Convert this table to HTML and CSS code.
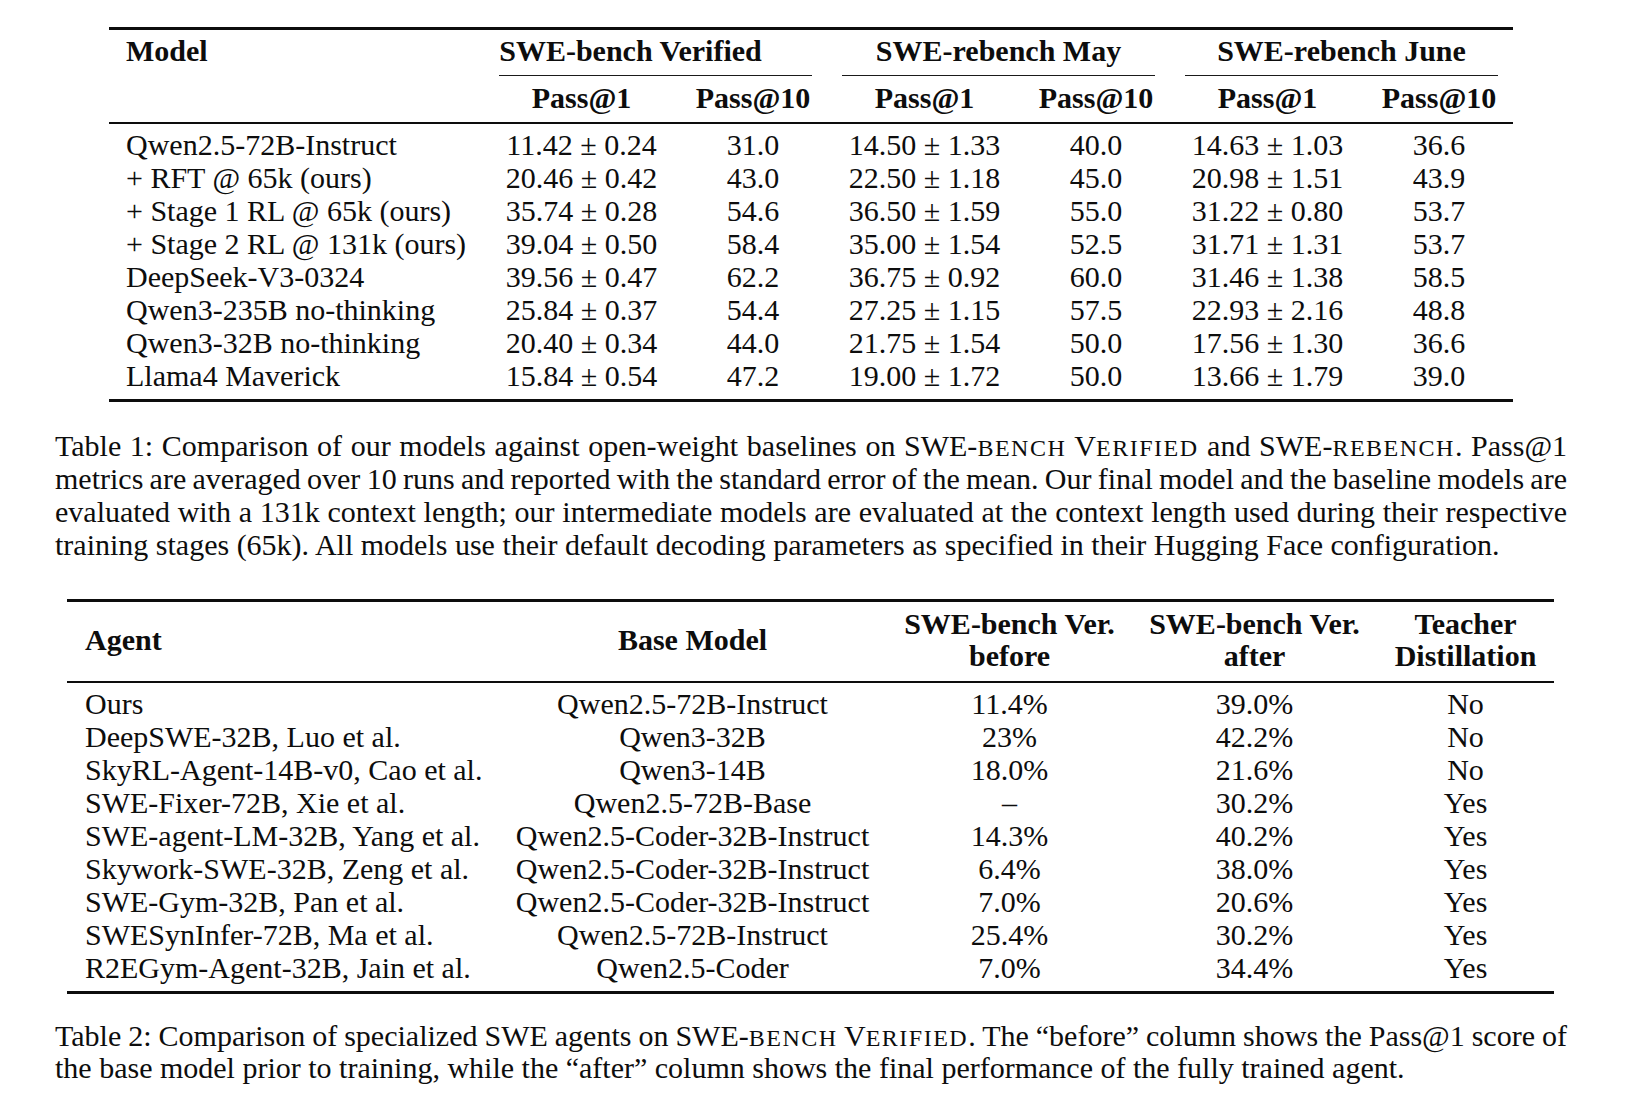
FILE: index.html
```html
<!DOCTYPE html>
<html lang="en">
<head>
<meta charset="utf-8">
<title>Tables</title>
<link rel="stylesheet" href="styles.css">
</head>
<body>
<div class="page">
  <table class="t1">
    <colgroup>
      <col class="c-model"><col class="c-wide"><col class="c-narrow"><col class="c-wide"><col class="c-narrow"><col class="c-wide"><col class="c-narrow">
    </colgroup>
    <thead>
      <tr class="hr1">
        <th class="left">Model</th>
        <th colspan="2"><div class="cmid"><span class="shift">SWE-bench Verified</span></div></th>
        <th colspan="2"><div class="cmid">SWE-rebench May</div></th>
        <th colspan="2"><div class="cmid">SWE-rebench June</div></th>
      </tr>
      <tr class="hr2">
        <th></th>
        <th>Pass@1</th><th>Pass@10</th>
        <th>Pass@1</th><th>Pass@10</th>
        <th>Pass@1</th><th>Pass@10</th>
      </tr>
    </thead>
    <tbody>
      <tr><td class="left">Qwen2.5-72B-Instruct</td><td>11.42 ± 0.24</td><td>31.0</td><td>14.50 ± 1.33</td><td>40.0</td><td>14.63 ± 1.03</td><td>36.6</td></tr>
      <tr><td class="left">+ RFT @ 65k (ours)</td><td>20.46 ± 0.42</td><td>43.0</td><td>22.50 ± 1.18</td><td>45.0</td><td>20.98 ± 1.51</td><td>43.9</td></tr>
      <tr><td class="left">+ Stage 1 RL @ 65k (ours)</td><td>35.74 ± 0.28</td><td>54.6</td><td>36.50 ± 1.59</td><td>55.0</td><td>31.22 ± 0.80</td><td>53.7</td></tr>
      <tr><td class="left">+ Stage 2 RL @ 131k (ours)</td><td>39.04 ± 0.50</td><td>58.4</td><td>35.00 ± 1.54</td><td>52.5</td><td>31.71 ± 1.31</td><td>53.7</td></tr>
      <tr><td class="left">DeepSeek-V3-0324</td><td>39.56 ± 0.47</td><td>62.2</td><td>36.75 ± 0.92</td><td>60.0</td><td>31.46 ± 1.38</td><td>58.5</td></tr>
      <tr><td class="left">Qwen3-235B no-thinking</td><td>25.84 ± 0.37</td><td>54.4</td><td>27.25 ± 1.15</td><td>57.5</td><td>22.93 ± 2.16</td><td>48.8</td></tr>
      <tr><td class="left">Qwen3-32B no-thinking</td><td>20.40 ± 0.34</td><td>44.0</td><td>21.75 ± 1.54</td><td>50.0</td><td>17.56 ± 1.30</td><td>36.6</td></tr>
      <tr><td class="left">Llama4 Maverick</td><td>15.84 ± 0.54</td><td>47.2</td><td>19.00 ± 1.72</td><td>50.0</td><td>13.66 ± 1.79</td><td>39.0</td></tr>
    </tbody>
  </table>

  <p class="caption cap1">
    <span class="ln">Table 1: Comparison of our models against open-weight baselines on SWE-<span class="sc">bench</span> V<span class="sc">erified</span> and SWE-<span class="sc">rebench</span>. Pass@1</span>
    <span class="ln">metrics are averaged over 10 runs and reported with the standard error of the mean. Our final model and the baseline models are</span>
    <span class="ln">evaluated with a 131k context length; our intermediate models are evaluated at the context length used during their respective</span>
    <span class="ln last">training stages (65k). All models use their default decoding parameters as specified in their Hugging Face configuration.</span>
  </p>

  <table class="t2">
    <colgroup>
      <col class="c-agent"><col class="c-base"><col class="c-ver"><col class="c-ver"><col class="c-teach">
    </colgroup>
    <thead>
      <tr>
        <th class="left">Agent</th>
        <th>Base Model</th>
        <th>SWE-bench Ver.<br>before</th>
        <th>SWE-bench Ver.<br>after</th>
        <th>Teacher<br>Distillation</th>
      </tr>
    </thead>
    <tbody>
      <tr><td class="left">Ours</td><td>Qwen2.5-72B-Instruct</td><td>11.4%</td><td>39.0%</td><td>No</td></tr>
      <tr><td class="left">DeepSWE-32B, Luo et al.</td><td>Qwen3-32B</td><td>23%</td><td>42.2%</td><td>No</td></tr>
      <tr><td class="left">SkyRL-Agent-14B-v0, Cao et al.</td><td>Qwen3-14B</td><td>18.0%</td><td>21.6%</td><td>No</td></tr>
      <tr><td class="left">SWE-Fixer-72B, Xie et al.</td><td>Qwen2.5-72B-Base</td><td>–</td><td>30.2%</td><td>Yes</td></tr>
      <tr><td class="left">SWE-agent-LM-32B, Yang et al.</td><td>Qwen2.5-Coder-32B-Instruct</td><td>14.3%</td><td>40.2%</td><td>Yes</td></tr>
      <tr><td class="left">Skywork-SWE-32B, Zeng et al.</td><td>Qwen2.5-Coder-32B-Instruct</td><td>6.4%</td><td>38.0%</td><td>Yes</td></tr>
      <tr><td class="left">SWE-Gym-32B, Pan et al.</td><td>Qwen2.5-Coder-32B-Instruct</td><td>7.0%</td><td>20.6%</td><td>Yes</td></tr>
      <tr><td class="left">SWESynInfer-72B, Ma et al.</td><td>Qwen2.5-72B-Instruct</td><td>25.4%</td><td>30.2%</td><td>Yes</td></tr>
      <tr><td class="left">R2EGym-Agent-32B, Jain et al.</td><td>Qwen2.5-Coder</td><td>7.0%</td><td>34.4%</td><td>Yes</td></tr>
    </tbody>
  </table>

  <p class="caption cap2">
    <span class="ln tight">Table 2: Comparison of specialized SWE agents on SWE-<span class="sc">bench</span> V<span class="sc">erified</span>. The “before” column shows the Pass@1 score of</span>
    <span class="ln last">the base model prior to training, while the “after” column shows the final performance of the fully trained agent.</span>
  </p>
</div>
</body>
</html>
```

FILE: styles.css
```css
html, body {
  margin: 0;
  padding: 0;
  background: #ffffff;
}

body {
  font-family: "Liberation Serif", "Times New Roman", serif;
  color: #0d0d0d;
  font-size: 30px;
  line-height: 33px;
}

.page {
  width: 1625px;
  padding-top: 27px;
}

table {
  border-collapse: collapse;
  table-layout: fixed;
}

th, td {
  padding: 0;
  text-align: center;
  white-space: nowrap;
  font-weight: normal;
}

th {
  font-weight: bold;
}

.left {
  text-align: left;
  padding-left: 17px;
}

/* ---------- Table 1 ---------- */
.t1 {
  margin-left: 109px;
  width: 1404px;
  border-top: 3px solid #0d0d0d;
  border-bottom: 3px solid #0d0d0d;
}

.t1 .c-model { width: 375px; }
.t1 .c-wide { width: 195px; }
.t1 .c-narrow { width: 148px; }

.t1 .hr1 th {
  padding-top: 4px;
  vertical-align: top;
}

.t1 .hr1 th.left {
  padding-bottom: 7px;
}

.cmid {
  margin: 0 15px;
  padding-bottom: 8px;
  border-bottom: 1.5px solid #1a1a1a;
}

.shift {
  display: inline-block;
  padding-right: 50px;
}

.t1 .hr2 th {
  padding-top: 5px;
  padding-bottom: 8px;
  border-bottom: 2px solid #0d0d0d;
}

.t1 tbody tr:first-child td {
  padding-top: 4px;
}

.t1 tbody tr:last-child td {
  padding-bottom: 7px;
}

/* ---------- Captions ---------- */
.caption {
  margin: 0 0 0 55px;
  width: 1512px;
}

.caption .ln {
  display: block;
  white-space: nowrap;
  text-align: justify;
  text-align-last: justify;
  word-spacing: -2px;
}

.caption .ln.tight {
  word-spacing: -3px;
}

.caption .ln.last {
  text-align-last: left;
  word-spacing: normal;
}

.sc {
  text-transform: uppercase;
  font-size: 0.8em;
  letter-spacing: 1.5px;
  line-height: 0;
}

.cap1 {
  margin-top: 27px;
}

/* ---------- Table 2 ---------- */
.t2 {
  margin-left: 67px;
  margin-top: 38px;
  width: 1487px;
  border-top: 3px solid #0d0d0d;
  border-bottom: 3px solid #0d0d0d;
}

.t2 .c-agent { width: 431px; }
.t2 .c-base { width: 389px; }
.t2 .c-ver { width: 245px; }
.t2 .c-teach { width: 177px; }

.t2 thead th {
  line-height: 32px;
  padding-top: 6px;
  padding-bottom: 9px;
  vertical-align: middle;
  border-bottom: 2px solid #0d0d0d;
}

.t2 thead th.left {
  padding-left: 18px;
}

.t2 td.left {
  padding-left: 18px;
}

.t2 tbody tr:first-child td {
  padding-top: 4px;
}

.t2 tbody tr:last-child td {
  padding-bottom: 7px;
}

.cap2 {
  margin-top: 26px;
  line-height: 32px;
}
```
